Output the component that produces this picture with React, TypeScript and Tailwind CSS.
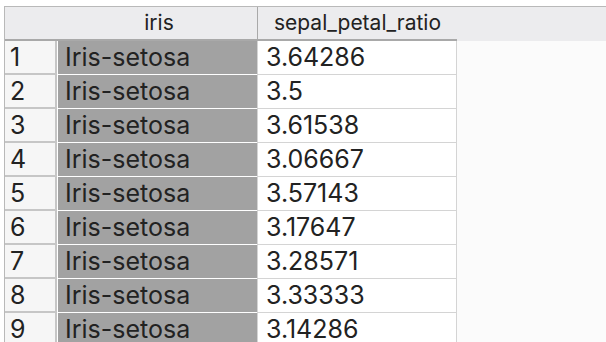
const rows: [number, string, string][] = [
  [1, "Iris-setosa", "3.64286"],
  [2, "Iris-setosa", "3.5"],
  [3, "Iris-setosa", "3.61538"],
  [4, "Iris-setosa", "3.06667"],
  [5, "Iris-setosa", "3.57143"],
  [6, "Iris-setosa", "3.17647"],
  [7, "Iris-setosa", "3.28571"],
  [8, "Iris-setosa", "3.33333"],
  [9, "Iris-setosa", "3.14286"],
];

function App() {
  return (
    <div className="h-[342px] w-[606px] overflow-hidden bg-white pt-[6px] pl-[4px] font-['Inter',sans-serif] text-[#222222]">
      <div className="h-full border-t border-l border-[#b9b9b9] bg-[#fbfbfb]">
        {/* header */}
        <div className="flex h-[34px] w-full bg-[#ececee]">
          <div className="flex w-[252px] items-center justify-center border-b-2 border-[#a9a9a9] pl-[56px] text-[21px]">
            iris
          </div>
          <div className="flex w-[200px] items-center justify-center border-b-2 border-l border-[#a9a9a9] text-[21px]">
            sepal_petal_ratio
          </div>
        </div>
        {rows.map(([n, name, ratio]) => (
          <div key={n} className="flex h-[34px]">
            <div className="flex w-[52px] items-center border-r-2 border-b-2 border-[#c6c6c6] bg-[#f6f6f6] pl-[5px] text-[25px] leading-none">
              {n}
            </div>
            <div className="flex w-[200px] items-center border-b border-l border-white bg-[#a2a2a2] pl-[7px] text-[25px] leading-none">
              {name}
            </div>
            <div className="flex w-[200px] items-center border-b border-l border-r border-[#d4d4d4] bg-white pl-[8px] text-[25px] leading-none">
              {ratio}
            </div>
          </div>
        ))}
      </div>
    </div>
  );
}

export default App;
